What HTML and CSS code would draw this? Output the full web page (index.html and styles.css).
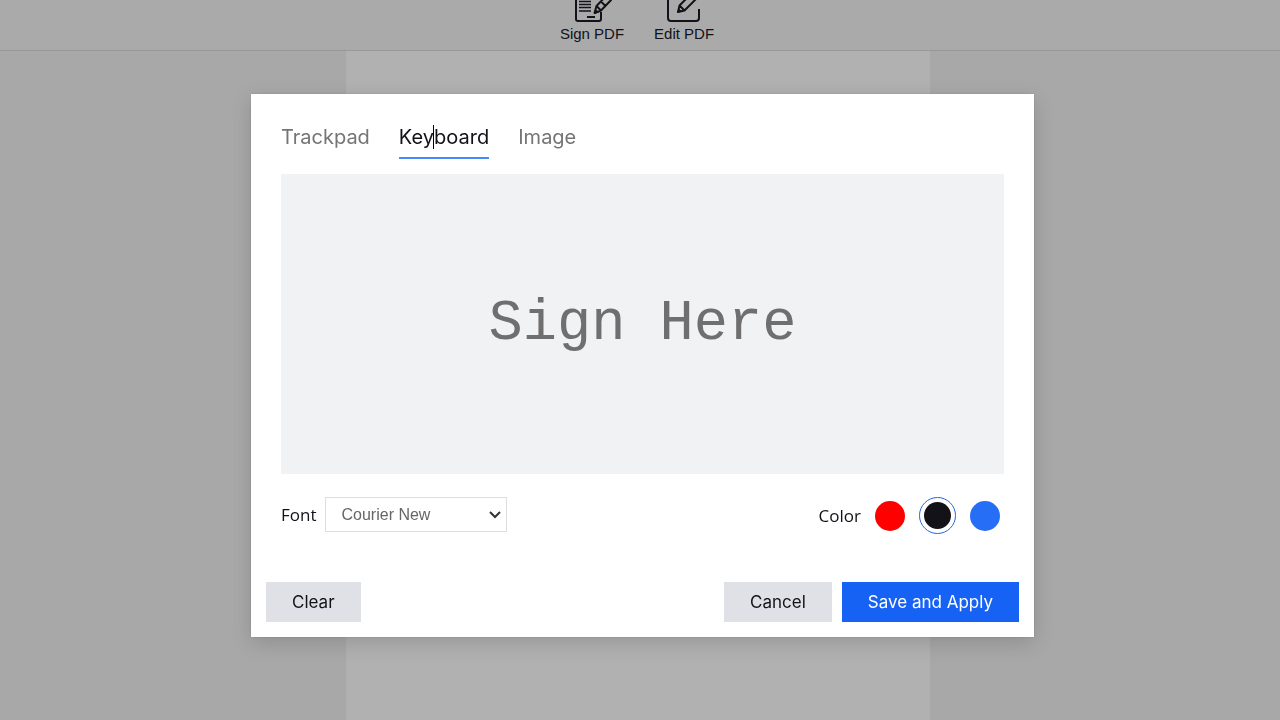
FILE: index.html
```html
<!DOCTYPE html>
<html lang="en">
<head>
<meta charset="utf-8">
<meta name="viewport" content="width=device-width, initial-scale=1">
<title>Sign PDF</title>
<link rel="stylesheet" href="styles.css">
</head>
<body>
<header class="toolbar">
  <button class="tool" type="button">
    <svg class="tool-icon" viewBox="0 0 40 32" fill="none" stroke="currentColor" stroke-width="2" stroke-linejoin="round" aria-hidden="true">
      <path d="M29 21v7q0 2-2 2H6q-2 0-2-2V2h20"/>
      <path d="M7 10.500h12M7 13.500h12M7 16.500h12M7 20h12" stroke-width="1.500"/>
      <path d="M15 26h8"/>
      <path d="M22.500 22l2-7L35 4l4.500 4.500L29 19.500zM24.500 15l4.500 4.500M29 10.500l4.500 4.500"/>
      <path d="M22 23l1.500-5 3.500 3.500z" fill="currentColor" stroke="none"/>
    </svg>
    <span>Sign PDF</span>
  </button>
  <button class="tool" type="button">
    <svg class="tool-icon" viewBox="0 0 40 32" fill="none" stroke="currentColor" stroke-width="2" stroke-linejoin="round" aria-hidden="true">
      <path d="M35 18v9q0 3-3 3H7q-3 0-3-3V2h20"/>
      <path d="M14 21l1.500-6.500L27 3l5 5-11.500 11.500zM15.500 14.500l5 5"/>
      <path d="M13 22l1.500-5 3.500 3.500z" fill="currentColor" stroke="none"/>
    </svg>
    <span>Edit PDF</span>
  </button>
</header>
<main class="workspace"><div class="page"></div></main>

<div class="overlay">
  <form class="dialog" role="dialog" aria-label="Create signature">
    <nav class="tabs" role="tablist">
      <button class="tab" type="button" role="tab">Trackpad</button>
      <button class="tab active" type="button" role="tab" aria-selected="true">Keyboard<i class="cursor"></i></button>
      <button class="tab" type="button" role="tab">Image</button>
    </nav>
    <input class="signature" type="text" placeholder="Sign Here" aria-label="Signature">
    <div class="options">
      <div class="font-option">
        <label for="font">Font</label>
        <span class="select-wrap">
          <select id="font"><option>Courier New</option></select>
          <svg class="chevron" viewBox="0 0 12 8" fill="none" stroke="currentColor" stroke-width="2" aria-hidden="true"><path d="M1 1l5 5 5-5"/></svg>
        </span>
      </div>
      <div class="colors" role="radiogroup" aria-labelledby="color-label">
        <span id="color-label">Color</span>
        <input class="swatch red" type="radio" name="color" aria-label="Red">
        <input class="swatch black" type="radio" name="color" aria-label="Black" checked>
        <input class="swatch blue" type="radio" name="color" aria-label="Blue">
      </div>
    </div>
    <footer class="actions">
      <button class="action clear" type="button">Clear</button>
      <button class="action" type="button">Cancel</button>
      <button class="action primary" type="button">Save and Apply</button>
    </footer>
  </form>
</div>
</body>
</html>
```
FILE: styles.css
```css
* { box-sizing: border-box; }
body {
  margin: 0;
  min-height: 100vh;
  display: flex;
  flex-direction: column;
  background: #a8a8a8;
  color: #121218;
  font-family: Inter, "Liberation Sans", sans-serif;
}
button, input, select { font: inherit; color: inherit; border: 0; margin: 0; }
button { background: none; padding: 0; cursor: pointer; }

.toolbar {
  display: flex;
  justify-content: center;
  align-items: flex-end;
  gap: 30px;
  height: 51px;
  padding: 0 6px 7px 0;
  background: #aaa;
  border-bottom: 1px solid #989898;
  overflow: hidden;
}
.tool {
  display: flex;
  flex-direction: column;
  align-items: center;
  font-family: "Liberation Sans", Arial, sans-serif;
  font-size: 15px;
  line-height: 18px;
}
.tool-icon { width: 40px; height: 32px; margin-bottom: 2px; }
.workspace { flex: 1; display: flex; justify-content: center; padding-right: 4px; }
.page { width: 584px; background: #b1b1b1; }

.overlay {
  position: fixed;
  inset: 0;
  display: flex;
  justify-content: center;
  align-items: center;
  padding: 11px 0 0 5px;
}
.dialog {
  display: flex;
  flex-direction: column;
  width: 783px;
  max-width: 100%;
  padding: 28px 15px 15px;
  background: #fff;
  box-shadow: 0 6px 20px rgba(0, 0, 0, 0.15), 0 0 2px rgba(0, 0, 0, 0.15);
}
.tabs { display: flex; gap: 29px; padding: 0 15px; margin-bottom: 15px; }
.tab {
  position: relative;
  padding-bottom: 5px;
  border-bottom: 2px solid transparent;
  color: #757575;
  font-size: 20px;
  line-height: 30px;
}
.tab.active { color: #121218; border-bottom-color: #4589ff; }
.cursor { position: absolute; left: 34px; top: 3px; width: 1px; height: 24px; background: #000; }
.signature {
  height: 300px;
  margin: 0 15px 23px;
  background: #f1f2f4;
  text-align: center;
  font-family: "Courier New", "Liberation Mono", monospace;
  font-size: 57px;
}
.signature::placeholder { color: #6f6f6f; opacity: 1; }
.options {
  display: flex;
  justify-content: space-between;
  align-items: flex-start;
  padding: 0 15px;
  margin-bottom: 48px;
  font-family: "Open Sans", "Noto Sans", sans-serif;
  font-size: 17px;
}
.font-option { display: flex; align-items: center; gap: 8px; }
.select-wrap { position: relative; }
.select-wrap select {
  display: block;
  appearance: none;
  width: 182px;
  height: 35px;
  padding: 0 30px 0 16px;
  border: 1px solid #ddd;
  border-radius: 0;
  background: #fff;
  color: #666;
  font-family: "Liberation Sans", Arial, sans-serif;
  font-size: 16px;
}
.chevron { position: absolute; right: 6px; top: 14px; width: 12px; height: 8px; color: #333; pointer-events: none; }
.colors { display: flex; align-items: center; gap: 14px; height: 37px; padding-right: 4px; }
.swatch { appearance: none; width: 30px; height: 30px; border-radius: 50%; }
.red { background: #f00; }
.black { background: #121218; }
.blue { background: #266ef6; }
.swatch:checked {
  width: 37px;
  height: 37px;
  padding: 4px;
  border: 1px solid #2467dc;
  background-clip: content-box;
}
.actions { display: flex; gap: 10px; }
.action { height: 40px; padding: 0 26px; background: #e0e1e6; font-size: 17px; }
.clear { margin-right: auto; }
.primary { background: #1662f5; color: #fff; }
```
